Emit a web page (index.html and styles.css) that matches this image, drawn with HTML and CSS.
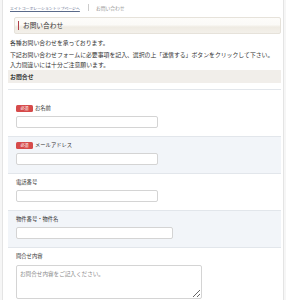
FILE: index.html
```html
<!DOCTYPE html>
<html lang="ja">
<head>
<meta charset="utf-8">
<link rel="stylesheet" href="styles.css">
</head>
<body>
<div class="page">
  <div class="crumbs">
    <a class="crumb-link" href="#">エイトコーポレーショントップページへ</a>
    <span class="crumb-sep"></span>
    <span class="crumb-current">お問い合わせ</span>
  </div>
  <h1 class="title"><span class="title-text">お問い合わせ</span></h1>
  <p class="intro intro-first">各種お問い合わせを承っております。</p>
  <p class="intro">下記お問い合わせフォームに必要事項を記入、選択の上「送信する」ボタンをクリックして下さい。<br>入力間違いには十分ご注意願います。</p>
  <h2 class="section">お問合せ</h2>
  <div class="form">
    <div class="row row-first">
      <div class="label"><span class="req">必須</span>お名前</div>
      <input class="field" type="text">
    </div>
    <div class="row row-alt">
      <div class="label"><span class="req">必須</span>メールアドレス</div>
      <input class="field" type="text">
    </div>
    <div class="row">
      <div class="label">電話番号</div>
      <input class="field" type="text">
    </div>
    <div class="row row-alt">
      <div class="label">物件番号・物件名</div>
      <input class="field field-wide" type="text">
    </div>
    <div class="row">
      <div class="label">問合せ内容</div>
      <textarea class="area" placeholder="お問合せ内容をご記入ください。"></textarea>
    </div>
  </div>
</div>
</body>
</html>
```
FILE: styles.css
```css
html, body {
  margin: 0;
  padding: 0;
  background: #f6f6f6;
}
body {
  font-family: "Noto Sans CJK JP", "Noto Sans", sans-serif;
  color: #333;
}
.page {
  margin-left: 2px;
  width: 273px;
  min-height: 300px;
  background: #fff;
  border-left: 1px solid #e4e4e4;
  border-right: 1px solid #e4e4e4;
  padding: 0 2px 0 5px;
}
.crumbs {
  display: flex;
  align-items: center;
  height: 14px;
  padding-left: 2px;
  padding-top: 1px;
  box-sizing: border-box;
}
.crumb-link {
  font-size: 3.9px;
  line-height: 8px;
  color: #5a6a8a;
  text-decoration: underline;
}
.crumb-sep {
  width: 1px;
  height: 7px;
  background: #ccc;
  margin: 0 7px 0 8px;
}
.crumb-current {
  font-size: 4.8px;
  line-height: 8px;
  color: #999;
}
.title {
  margin: 3px 0 0 6px;
  height: 17px;
  box-sizing: border-box;
  border: 1px solid #e6e2da;
  border-radius: 2px;
  background: linear-gradient(#fdfcfa 0%, #fbfaf7 45%, #efebe3 60%, #f3f0ea 100%);
  display: flex;
  align-items: center;
  padding-left: 3px;
  font-weight: normal;
}
.title-text {
  font-size: 6.7px;
  line-height: 9px;
  border-left: 1.5px solid #b0414a;
  padding-left: 4px;
  color: #333;
}
.intro {
  margin: 2px 0 0 0;
  padding-left: 2px;
  font-size: 5.87px;
  line-height: 10px;
  white-space: nowrap;
}
.intro-first {
  margin-top: 4px;
}
.section {
  margin: 0;
  height: 13px;
  background: #f1eeea;
  padding-left: 2px;
  font-size: 5.9px;
  line-height: 13px;
  font-weight: bold;
}
.form {
  margin-top: 6px;
}
.row {
  display: flex;
  flex-direction: column;
  align-items: flex-start;
  border-top: 1px solid #e2e6eb;
  padding: 4px 0 8px 8px;
}
.row-first {
  padding-top: 14px;
}
.row-alt {
  background: #f2f5f9;
}
.label {
  display: flex;
  align-items: center;
  font-size: 5.3px;
  line-height: 8px;
}
.req {
  display: inline-block;
  background: #d64b4b;
  color: #fff;
  font-size: 4px;
  line-height: 7px;
  width: 17px;
  text-align: center;
  border-radius: 1.5px;
  margin-right: 2px;
}
.field {
  margin-top: 4px;
  width: 142px;
  height: 12px;
  box-sizing: border-box;
  border: 1px solid #d4d4d4;
  border-radius: 2px;
  background: #fff;
  padding: 0;
}
.field-wide {
  width: 157px;
}
.area {
  margin-top: 5px;
  width: 186px;
  height: 34px;
  box-sizing: border-box;
  border: 1px solid #d4d4d4;
  border-radius: 2px;
  background: #fff;
  padding: 4px 3px;
  font-family: "Noto Sans CJK JP", sans-serif;
  font-size: 5.6px;
  line-height: 8px;
}
.area::placeholder {
  color: #8a8a8a;
}
```
